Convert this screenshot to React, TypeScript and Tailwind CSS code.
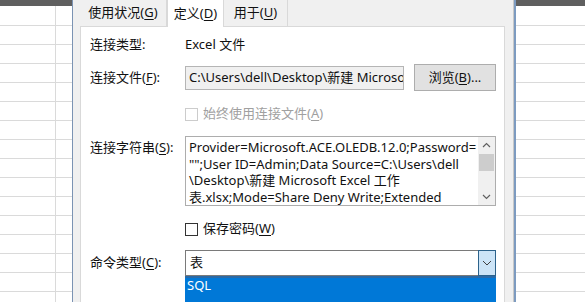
import React from "react";

const font = "font-['Noto_Sans','Noto_Sans_CJK_SC',sans-serif]";

// spreadsheet background on both sides of the dialog
const Sheet = ({ width, col }: { width: string; col?: boolean }) => (
  <div className={`${width} h-full bg-white flex flex-col shrink-0 overflow-hidden`}>
    <div className="h-[6px] bg-[#5f5f5f] shrink-0" />
    {Array.from({ length: 16 }).map((_, i) => (
      <div
        key={i}
        className={`h-[19px] shrink-0 border-b border-[#dadada] flex ${i === 0 ? "h-[20px]" : ""}`}
      >
        {col && <div className="w-[56px] border-r border-[#dadada]" />}
      </div>
    ))}
  </div>
);

const Acc = ({ pre, k }: { pre: string; k: string }) => (
  <span>
    {pre}(<span className="underline underline-offset-2">{k}</span>)
  </span>
);

const Check = ({ disabled }: { disabled?: boolean }) => (
  <div
    className={`w-[13px] h-[13px] border bg-white shrink-0 ${
      disabled ? "border-[#cccccc]" : "border-[#333333]"
    }`}
  />
);

export default function App() {
  return (
    <div className={`w-[585px] h-[302px] flex overflow-hidden text-[13px] text-[#111] ${font}`}>
      <Sheet width="w-[72px]" col />
      <div className="w-[1px] h-full bg-[#7b93b3] shrink-0" />

      {/* dialog */}
      <div className="w-[440px] h-full bg-[#f0f0f0] pl-[7px] pr-[8px] flex flex-col shrink-0">
        {/* tabs */}
        <div className="h-[26px] flex items-end shrink-0">
          <div className="h-[26px] w-[87px] border-r border-[#d9d9d9] flex items-center justify-center pb-[1px]">
            <Acc pre="使用状况" k="G" />
          </div>
          <div className="h-[27px] w-[57px] bg-white border-x border-[#d9d9d9] flex items-center justify-center mb-[-1px] z-10">
            <Acc pre="定义" k="D" />
          </div>
          <div className="h-[26px] w-[64px] border-r border-[#d9d9d9] flex items-center justify-center pb-[1px]">
            <Acc pre="用于" k="U" />
          </div>
        </div>

        {/* panel */}
        <div className="flex-1 bg-white border border-b-0 border-[#d9d9d9] pl-[9px] flex flex-col">
          <div className="h-[18px] mt-[9px] flex items-center">
            <div className="w-[95px]">连接类型:</div>
            <div>Excel 文件</div>
          </div>

          <div className="h-[27px] mt-[10px] flex items-center">
            <div className="w-[95px]">
              <Acc pre="连接文件" k="F" />:
            </div>
            <div className="w-[219px] h-[24px] bg-[#f0f0f0] border border-[#b5b5b5] pl-[3px] flex items-center overflow-hidden whitespace-nowrap">
              {"C:\\Users\\dell\\Desktop\\新建 Microso"}
            </div>
            <div className="w-[82px] h-[27px] ml-[10px] bg-[#e1e1e1] border border-[#adadad] flex items-center justify-center whitespace-nowrap">
              浏览(<u className="underline-offset-2">B</u>)...
            </div>
          </div>

          <div className="h-[16px] mt-[15px] flex items-center pl-[95px] gap-[5px] text-[#a0a0a0]">
            <Check disabled />
            <Acc pre="始终使用连接文件" k="A" />
          </div>

          <div className="h-[70px] mt-[14px] flex items-start">
            <div className="w-[95px] leading-[16.5px] pt-[3px]">
              <Acc pre="连接字符串" k="S" />:
            </div>
            <div className="w-[311px] h-[70px] border border-[#adadad] flex">
              <div className="flex-1 pl-[3px] pt-[2px] leading-[16.5px] whitespace-nowrap overflow-hidden">
                <div>Provider=Microsoft.ACE.OLEDB.12.0;Password=</div>
                <div>{'"";User ID=Admin;Data Source=C:\\Users\\dell'}</div>
                <div>{"\\Desktop\\新建 Microsoft Excel 工作"}</div>
                <div>表.xlsx;Mode=Share Deny Write;Extended</div>
              </div>
              <div className="w-[17px] h-full bg-[#f0f0f0] flex flex-col items-center">
                <svg width="17" height="17" viewBox="0 0 17 17" className="shrink-0">
                  <path d="M5 10 L8.5 6.5 L12 10" fill="none" stroke="#606060" strokeWidth="1.2" />
                </svg>
                <div className="w-[15px] h-[17px] bg-[#cdcdcd]" />
                <div className="flex-1" />
                <svg width="17" height="17" viewBox="0 0 17 17" className="shrink-0">
                  <path d="M5 7 L8.5 10.5 L12 7" fill="none" stroke="#606060" strokeWidth="1.2" />
                </svg>
              </div>
            </div>
          </div>

          <div className="h-[16px] mt-[15px] flex items-center pl-[95px] gap-[5px]">
            <Check />
            <Acc pre="保存密码" k="W" />
          </div>

          <div className="h-[26px] mt-[13px] flex items-center">
            <div className="w-[95px]">
              <Acc pre="命令类型" k="C" />:
            </div>
            <div className="w-[311px] h-[26px] bg-white border border-[#7a7a7a] border-r-0 flex items-center">
              <div className="flex-1 pl-[4px]">表</div>
              <div className="w-[18px] h-[26px] bg-[#cce4f7] border border-[#2c628b] flex items-center justify-center">
                <svg width="10" height="6" viewBox="0 0 10 6">
                  <path d="M1 1 L5 5 L9 1" fill="none" stroke="#404040" strokeWidth="1" />
                </svg>
              </div>
            </div>
          </div>

          <div className="flex">
            <div className="w-[95px]" />
            <div className="w-[311px] h-[30px] bg-[#0078d7] border-t-2 border-[#2a6aa7] text-white pl-[2px] leading-[14px]">
              SQL
            </div>
          </div>
        </div>
      </div>

      <div className="w-[3px] h-full bg-[#7d9bc0] border-l border-[#c8c8c8] shrink-0" />
      <Sheet width="flex-1" />
    </div>
  );
}
